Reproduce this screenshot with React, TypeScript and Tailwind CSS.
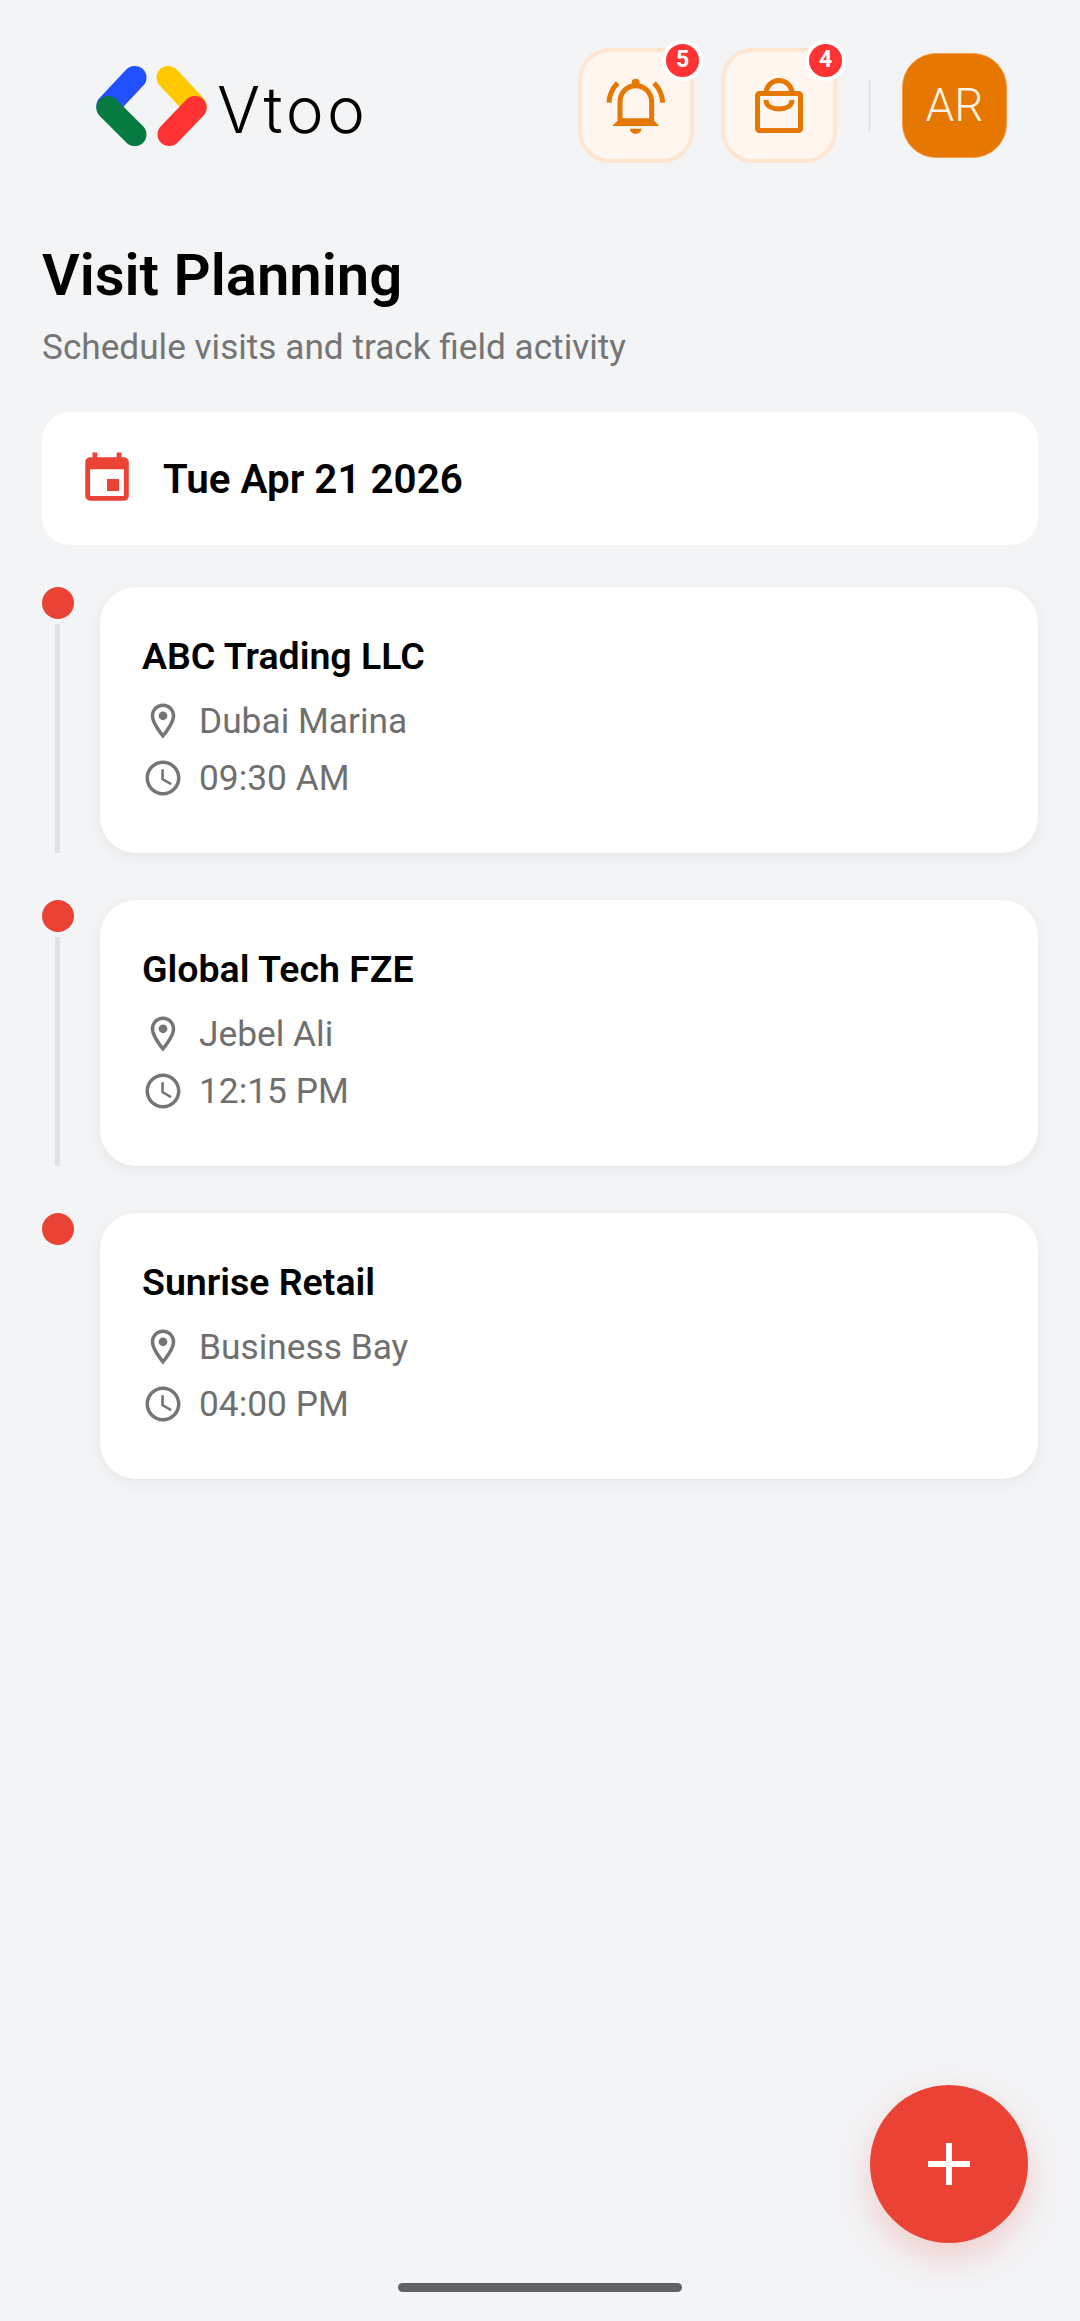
import React from "react";
import { MdEvent, MdOutlineAccessTime, MdOutlineLocationOn } from "react-icons/md";

const visits = [
    { name: "ABC Trading LLC", place: "Dubai Marina", time: "09:30 AM" },
    { name: "Global Tech FZE", place: "Jebel Ali", time: "12:15 PM" },
    { name: "Sunrise Retail", place: "Business Bay", time: "04:00 PM" },
];

function Logo() {
    return (
        <svg width="117" height="84" viewBox="100 100 350 250" fill="none" strokeWidth="70" strokeLinecap="round">
            <path d="M225 140L145 225" stroke="#2350ff" />
            <path d="M145 230L225 310" stroke="#067a41" />
            <path d="M325 140L405 225" stroke="#ffc800" />
            <path d="M405 230L328 310" stroke="#ff3333" />
        </svg>
    );
}

function BellIcon() {
    return (
        <svg width="60" height="60" viewBox="140 145 180 180" fill="none" stroke="#e67700" strokeWidth="15" className="mt-[5px]">
            <circle cx="229" cy="159" r="12" fill="#e67700" stroke="none" />
            <path d="M182 272V218C182 188 203 168 229 168S277 188 277 218V272" />
            <path d="M159 289L182 266H277L300 289Z" fill="#e67700" stroke="none" />
            <path d="M212 297H246C246 307 238 312 229 312S212 307 212 297Z" fill="#e67700" stroke="none" />
            <path d="M149 219C150 194 160 175 175 160" />
            <path d="M310 219C309 194 299 175 284 160" />
        </svg>
    );
}

function BagIcon() {
    return (
        <svg width="48" height="55" viewBox="0 0 48 55" fill="none" stroke="#e67700" strokeWidth="5">
            <rect x="2.5" y="15.5" width="43" height="37" rx="2" />
            <path d="M11 15.5A13 13 0 0 1 37 15.5" />
            <path d="M11 22C11 28 17 31 24 31S37 28 37 22" />
        </svg>
    );
}

function IconBox({ count, children }: { count: number; children: React.ReactNode }) {
    return (
        <div className="relative flex h-[115px] w-[116px] items-center justify-center rounded-[32px] border-[4px] border-[#ffe6d0] bg-[#fff6f0]">
            {children}
            <span className="absolute -right-[13px] -top-[12px] flex h-[41px] w-[41px] items-center justify-center rounded-full border-[4px] border-white bg-[#ff3333] text-[23px] font-bold text-white">
                {count}
            </span>
        </div>
    );
}

function VisitRow({ visit, last }: { visit: (typeof visits)[number]; last: boolean }) {
    return (
        <div className="flex">
            <div className="flex w-[58px] shrink-0 flex-col">
                <div className="h-[32px] w-[32px] rounded-full bg-[#ea4335]" />
                {!last && <div className="ml-[13px] mt-[5px] w-[5px] flex-1 bg-[#dfe1e3]" />}
            </div>
            <div className="h-[266px] flex-1 rounded-[36px] bg-white pl-[42px] pt-[47px] shadow-[0_4px_14px_rgba(0,0,0,0.06)]">
                <div className="text-[37.5px] leading-[44px] font-semibold text-black">{visit.name}</div>
                <div className="mt-[22px] flex h-[42px] items-center gap-[15px] text-[35.3px] text-[#6f6f6f]">
                    <MdOutlineLocationOn size={42} color="#757575" />
                    <span>{visit.place}</span>
                </div>
                <div className="mt-[15px] flex h-[42px] items-center gap-[15px] text-[35.3px] text-[#6f6f6f]">
                    <MdOutlineAccessTime size={42} color="#757575" />
                    <span>{visit.time}</span>
                </div>
            </div>
        </div>
    );
}

export default function App() {
    return (
        <div className="relative h-[2321px] overflow-hidden bg-[#f3f4f6] px-[42px] pt-[48px] font-['Roboto',sans-serif]">
            <header className="flex h-[115px] items-center">
                <div className="ml-[51px] flex items-center gap-[7px]">
                    <Logo />
                    <span className="pt-[8px] font-['Inter',sans-serif] text-[64px] leading-none font-[350] tracking-[3.5px] text-black">Vtoo</span>
                </div>
                <div className="ml-auto mr-[31px] flex items-center">
                    <IconBox count={5}>
                        <BellIcon />
                    </IconBox>
                    <div className="ml-[27px]">
                        <IconBox count={4}>
                            <BagIcon />
                        </IconBox>
                    </div>
                    <div className="ml-[31px] h-[52px] w-[3px] bg-[#e6e8ea]" />
                    <div className="ml-[31px] flex h-[105px] w-[105px] items-center justify-center rounded-[34px] border border-[#f4a050] bg-[#e67700] text-[46px] font-light text-[#fff3e6]">
                        AR
                    </div>
                </div>
            </header>

            <h1 className="mt-[79px] text-[58px] leading-[66px] font-semibold text-black">Visit Planning</h1>
            <p className="mt-[17px] text-[35.2px] leading-[44px] text-[#757575]">Schedule visits and track field activity</p>

            <div className="mt-[43px] flex h-[133px] items-center gap-[27px] rounded-[28px] bg-white pl-[36px]">
                <MdEvent size={58} color="#ea4335" />
                <span className="pt-[4px] text-[40.4px] font-semibold text-black">Tue Apr 21 2026</span>
            </div>

            <div className="mt-[42px] flex flex-col">
                {visits.map((visit, i) => (
                    <div key={visit.name} className={i > 0 ? "mt-[47px]" : ""}>
                        <VisitRow visit={visit} last={i === visits.length - 1} />
                    </div>
                ))}
            </div>

            <button className="absolute left-[870px] top-[2085px] flex h-[158px] w-[158px] items-center justify-center rounded-full bg-[#ea4335] shadow-[0_14px_34px_rgba(234,67,53,0.22)]">
                <svg width="42" height="42" viewBox="0 0 42 42" fill="#fff">
                    <rect x="18" y="0" width="6" height="42" />
                    <rect x="0" y="18" width="42" height="6" />
                </svg>
            </button>

            <div className="absolute bottom-[29px] left-[398px] h-[9px] w-[284px] rounded-full bg-[#5f6368]" />
        </div>
    );
}
